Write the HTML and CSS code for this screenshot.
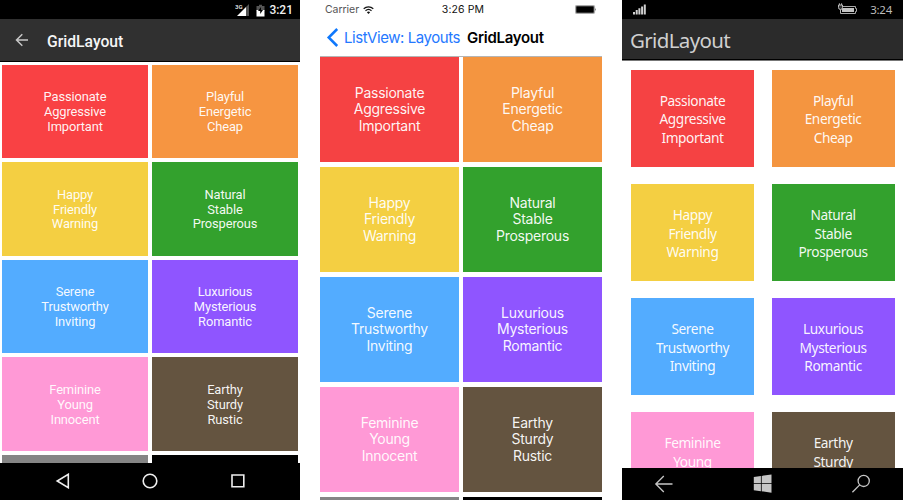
FILE: index.html
```html
<!DOCTYPE html>
<html lang="en">
<head>
<meta charset="utf-8">
<title>GridLayout</title>
<link rel="stylesheet" href="styles.css">
</head>
<body>
<main class="stage">
  <section class="phone android">
    <div class="status">
      <svg class="signal" width="15" height="14" viewBox="0 0 15 14"><path d="M14 1v12h-3V4z" fill="#555"/><path d="M11 4v9H2z" fill="#fff"/><text x="0" y="5.8" class="network">3G</text></svg>
      <svg class="charge" width="9" height="13" viewBox="0 0 9 13"><path d="M.5 2H3V.7h3V2h2.500v5h-8z" fill="#555"/><path d="M.5 6h8v6.500h-8z" fill="#fff"/><path d="M5 3 2 7h2.200v3L7 6H5z" fill="#000"/></svg>
      <span>3:21</span>
    </div>
    <header class="bar">
      <svg class="back" width="14" height="14" viewBox="0 0 14 14"><path d="M13 7H2M7.300 1.200 1.500 7l5.800 5.800" fill="none" stroke="#c6c6c6" stroke-width="1.500"/></svg>
      <h1>GridLayout</h1>
    </header>
    <div class="grid">
      <div class="tile red">Passionate<br>Aggressive<br>Important</div><div class="tile orange">Playful<br>Energetic<br>Cheap</div>
      <div class="tile yellow">Happy<br>Friendly<br>Warning</div><div class="tile green">Natural<br>Stable<br>Prosperous</div>
      <div class="tile blue">Serene<br>Trustworthy<br>Inviting</div><div class="tile purple">Luxurious<br>Mysterious<br>Romantic</div>
      <div class="tile pink">Feminine<br>Young<br>Innocent</div><div class="tile brown">Earthy<br>Sturdy<br>Rustic</div>
      <div class="tile gray"></div><div class="tile black"></div>
    </div>
    <nav class="nav">
      <svg width="16" height="16" viewBox="0 0 16 16"><path d="M13.300 1.300v13.400L2.200 8z"/></svg>
      <svg width="16" height="16" viewBox="0 0 16 16"><circle cx="8" cy="8" r="6.800"/></svg>
      <svg width="16" height="16" viewBox="0 0 16 16"><path d="M2 2h11.800v11.800H2z"/></svg>
    </nav>
  </section>

  <section class="phone ios">
    <div class="status">
      <span class="carrier">Carrier <svg width="11" height="8" viewBox="0 0 11 8"><path d="M.7 2.800a7 7 0 0 1 9.600 0M2.500 4.700a4.400 4.400 0 0 1 6 0" fill="none" stroke="#111" stroke-width="1.200"/><path d="M5.500 7.900 3.900 6.200a2.300 2.300 0 0 1 3.200 0z" fill="#111"/></svg></span>
      <span class="clock">3:26 PM</span>
      <svg class="battery" width="22" height="9" viewBox="0 0 22 9"><rect x=".4" y=".4" width="19.200" height="8.200" rx="1.200" fill="none" stroke="#777" stroke-width=".7"/><rect x="1.200" y="1.200" width="17.600" height="6.600" fill="#000"/><path d="M20.300 3q1.200 1.500 0 3z" fill="#222"/></svg>
    </div>
    <header class="bar">
      <svg class="back" width="13" height="19" viewBox="0 0 13 19"><path d="M11.200 1 2.700 9.500l8.500 8.500" fill="none" stroke="#0f78fc" stroke-width="2.500"/></svg>
      <span class="parent">ListView: Layouts</span>
      <h1>GridLayout</h1>
    </header>
    <div class="grid">
      <div class="tile red">Passionate<br>Aggressive<br>Important</div><div class="tile orange">Playful<br>Energetic<br>Cheap</div>
      <div class="tile yellow">Happy<br>Friendly<br>Warning</div><div class="tile green">Natural<br>Stable<br>Prosperous</div>
      <div class="tile blue">Serene<br>Trustworthy<br>Inviting</div><div class="tile purple">Luxurious<br>Mysterious<br>Romantic</div>
      <div class="tile pink">Feminine<br>Young<br>Innocent</div><div class="tile brown">Earthy<br>Sturdy<br>Rustic</div>
      <div class="tile gray"></div><div class="tile black"></div>
    </div>
  </section>

  <section class="phone windows">
    <div class="status">
      <svg class="signal" width="13" height="11" viewBox="0 0 13 11"><path d="M0 8h2v2.500H0zM2.700 6h2v4.500h-2zM5.400 4.300h2v6.200h-2zM8.100 2.500h2v8h-2zM10.800.500h2v10h-2z" fill="#d0d0d0"/></svg>
      <svg class="battery" width="21" height="12" viewBox="0 0 21 12"><path d="M5.500 3.500h13v2h1v3h-1v2h-15V7" fill="none" stroke="#aaa"/><path d="M5 5h12v4H5z" fill="#c4c4c4"/><path d="M1.500 2h4v2.500a2 2 0 0 1-4 0zM2.400 2V.3M4.600 2V.3M3.500 6.500v3" fill="#333" stroke="#bbb"/></svg>
      <span>3:24</span>
    </div>
    <header class="bar"><h1>GridLayout</h1></header>
    <div class="grid">
      <div class="tile red">Passionate<br>Aggressive<br>Important</div><div class="tile orange">Playful<br>Energetic<br>Cheap</div>
      <div class="tile yellow">Happy<br>Friendly<br>Warning</div><div class="tile green">Natural<br>Stable<br>Prosperous</div>
      <div class="tile blue">Serene<br>Trustworthy<br>Inviting</div><div class="tile purple">Luxurious<br>Mysterious<br>Romantic</div>
      <div class="tile pink">Feminine<br>Young</div><div class="tile brown">Earthy<br>Sturdy</div>
    </div>
    <nav class="nav">
      <svg width="20" height="20" viewBox="0 0 20 20"><path d="M18.500 10H1.800M9.800 2 1.800 10l8 8"/></svg>
      <svg width="20" height="20" viewBox="0 0 20 20"><path class="solid" d="M.8 3 7.900 2V9.200H.8zM8.700 1.900 18.500.500v8.700H8.700zM.8 10h7.100v7.300l-7.100-1zM8.700 10h9.800v8.700l-9.800-1.400z"/></svg>
      <svg width="20" height="20" viewBox="0 0 20 20"><circle cx="12.700" cy="6.900" r="5.600"/><path d="M8.700 10.900 1.400 18.200"/></svg>
    </nav>
  </section>
</main>
</body>
</html>
```
FILE: styles.css
```css
* { box-sizing: border-box; }
body { margin: 0; background: #fff; }
h1 { margin: 0; }
svg { display: block; flex: none; }

.stage {
  display: grid;
  grid-template-columns: 300px 282px 281px;
  column-gap: 20px;
  width: 903px;
  height: 500px;
  overflow: hidden;
}
.phone { display: flex; flex-direction: column; height: 500px; overflow: hidden; }
.status, .bar, .nav { display: flex; align-items: center; flex: none; white-space: nowrap; }
.grid { display: grid; flex: 1; min-height: 0; overflow: hidden; align-content: start; }
.tile {
  display: flow-root;
  text-align: center;
  color: rgba(255, 255, 255, .95);
  white-space: nowrap;
}

.red { background: #f54243; }
.orange { background: #f49540; }
.yellow { background: #f4cf42; }
.green { background: #33a12d; }
.blue { background: #53acff; }
.purple { background: #8f55ff; }
.pink { background: #ff99d6; }
.brown { background: #645440; }
.gray { background: #858585; }
.black { background: #000; }

/* Android */
.android { font-family: Roboto, sans-serif; }
.android .red { background: #f94144; }
.android .orange { background: #f69541; }
.android .status { height: 19px; padding: 1px 7px 0 0; justify-content: flex-end; background: #000; color: #f0f0f0; font-size: 12px; font-weight: 500; }
.android .signal { margin-right: 6px; }
.android .charge { margin-right: 4px; }
.network { font: bold 6px Roboto, sans-serif; fill: #ddd; }
.android .bar { height: 43px; padding: 2px 0 0 15px; background: #303030; border-bottom: 1px solid #000; color: #f5f5f5; }
.android .back { margin-right: 18px; margin-bottom: 2px; }
.android h1 { font-size: 15.700px; font-weight: 500; }
.android .grid { grid-template-columns: 146px 146px; grid-auto-rows: 93.400px; gap: 4.200px 4px; padding: 2.700px 2px 0; }
.android .tile { padding-top: 25.400px; font-size: 12.900px; line-height: 14.900px; letter-spacing: -.13px; }
.android .nav { height: 37px; justify-content: space-between; padding: 0 54.500px 1px; background: #000; }
.android .nav svg { fill: none; stroke: #eee; stroke-width: 1.600; }

/* iOS */
.ios { font-family: Inter, sans-serif; }
.ios .status { display: grid; grid-template-columns: 1fr auto 1fr; height: 19px; padding: 0 5px; font-size: 10.500px; letter-spacing: .1px; color: #111; }
.carrier { display: flex; align-items: center; gap: 4px; color: #555; letter-spacing: -.05px; }
.clock { padding-left: 4px; }
.ios .battery { justify-self: end; }
.ios .bar { height: 38px; padding: 0 0 0 6px; border-bottom: 1px solid #b5b5b5; font-size: 15px; }
.ios .back { margin-right: 5px; }
.parent { color: #2478ff; margin-right: 7px; letter-spacing: -.44px; }
.ios h1 { font-size: 15px; font-weight: 600; letter-spacing: -.28px; }
.ios .grid { grid-template-columns: 139px 139px; grid-auto-rows: 105.500px; gap: 4.500px 4px; margin-top: -.500px; }
.ios .tile { padding-top: 28px; font-size: 14px; line-height: 16.800px; letter-spacing: -.25px; }

/* Windows */
.windows { font-family: "Noto Sans", sans-serif; }
.windows .status { height: 19px; padding: 0 11px; background: #000; color: #bbb; font-size: 11.500px; letter-spacing: -.25px; }
.windows .battery { margin: 0 12px 2px auto; }
.windows .bar { height: 42px; padding: 1px 0 0 8px; background: #2b2b2b; border-bottom: 1px solid #777; box-shadow: inset 0 -1px #000; color: #d0d0d0; }
.windows h1 { font: 400 20.500px "Noto Sans", sans-serif; letter-spacing: -.65px; }
.windows .grid { grid-template-columns: 123px 123px; grid-auto-rows: 96.500px; gap: 17.600px; padding: 9px 8px 0 9px; }
.windows .tile { padding-top: 22px; font-size: 13.700px; line-height: 18.400px; letter-spacing: -.4px; }
.windows .nav { height: 32px; justify-content: space-between; padding: 0 32px; background: #000; }
.windows .nav svg { fill: none; stroke: #c6c6c6; stroke-width: 1.300; }
.windows .nav .solid { fill: #c6c6c6; stroke: none; }
```
